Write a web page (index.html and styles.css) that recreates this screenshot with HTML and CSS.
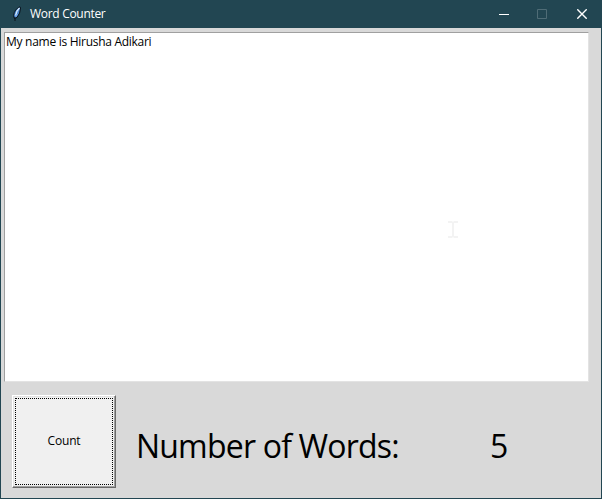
FILE: index.html
```html
<!DOCTYPE html>
<html lang="en">
<head>
<meta charset="utf-8">
<title>Word Counter</title>
<link rel="stylesheet" href="styles.css">
</head>
<body>
<div class="window">
  <header class="titlebar">
    <svg class="feather" width="10" height="16" viewBox="0 0 10 16">
      <path d="M8 .8C4.500 2 2 5.500 1.600 9.500L2.300 12.300L5 11.500L7.600 7L8.500 2Z" fill="#4b86cf" stroke="#081018" stroke-width="1"/>
      <path d="M7.500 1.800L5 5L3.600 9.500" fill="none" stroke="#d5e8fb" stroke-width="1.300"/>
      <path d="M5.500 8L3.300 11.500" stroke="#78aef0" stroke-width="1"/>
      <path d="M3 11V15" stroke="#081018" stroke-width="1"/>
    </svg>
    <span class="title">Word Counter</span>
    <div class="controls">
      <svg class="minimize" width="10" height="10" viewBox="0 0 10 10"><path d="M0 5.500H10" stroke="#fff"/></svg>
      <svg class="maximize" width="10" height="10" viewBox="0 0 10 10"><path d="M.5 .5H9.500V9.500H.5Z" fill="none" stroke="#4f6c76"/></svg>
      <svg width="10" height="10" viewBox="0 0 10 10"><path d="M.3 .3L9.700 9.700M9.700 .3L.3 9.700" stroke="#fff" stroke-width="1.400"/></svg>
    </div>
  </header>
  <main class="content">
    <div class="editor"><span class="typed">My name is Hirusha Adikari</span>
      <svg class="ibeam" width="10" height="17" viewBox="0 0 10 17"><path d="M0 0H4L5 1L6 0H10V2H6V15H10V17H6L5 16L4 17H0V15H4V2H0Z" fill="#f3f3f3"/></svg>
    </div>
    <div class="footer">
      <button class="count"><span class="focus"><span class="count-text">Count</span></span></button>
      <span class="label">Number of Words:</span>
      <span class="result">5</span>
    </div>
  </main>
</div>
</body>
</html>
```

FILE: styles.css
```css
* { box-sizing: border-box; }
body { margin: 0; font: 12px/16px "Open Sans", "Noto Sans", sans-serif; color: #000; }
svg { display: block; flex: none; }
.window { width: 602px; height: 499px; background: #224652; display: flex; flex-direction: column; overflow: hidden; }
.titlebar { height: 28px; flex: none; display: flex; align-items: center; padding: 0 15px 0 12px; color: #fff; }
.title { margin-left: 8px; letter-spacing: -0.3px; white-space: nowrap; }
.controls { margin-left: auto; display: flex; }
.minimize { margin-right: 28px; }
.maximize { margin-right: 30px; }
.content { flex: 1; margin: 0 1px 1px; background: #d9d9d9; padding: 4px 12px 0 3px; display: flex; flex-direction: column; }
.editor { position: relative; height: 350px; flex: none; background: #fff; border: 1px solid #e3e3e3; border-top-color: #a0a0a0; border-left-color: #a0a0a0; padding: 1px; white-space: nowrap; }
.typed { letter-spacing: -0.28px; }
.ibeam { position: absolute; left: 443px; top: 188px; }
.footer { display: flex; align-items: flex-start; padding: 13px 0 0 8px; font-size: 32px; line-height: 44px; white-space: nowrap; }
.count { width: 104px; height: 93px; flex: none; padding: 1px; background: #f0f0f0; border: 1px solid; border-color: #fff #696969 #696969 #fff; box-shadow: inset -1px -1px #a0a0a0, inset 1px 1px #e3e3e3; font: 12px/16px "Open Sans", sans-serif; color: #000; display: flex; }
.focus { flex: 1; align-self: stretch; margin: 1px; padding-bottom: 2px; border: 1px dotted #000; display: flex; align-items: center; justify-content: center; }
.count-text { letter-spacing: -0.2px; }
.label { margin: 29px 0 0 20px; width: 354px; letter-spacing: -0.8px; }
.result { margin-top: 29px; letter-spacing: -0.8px; }
```
